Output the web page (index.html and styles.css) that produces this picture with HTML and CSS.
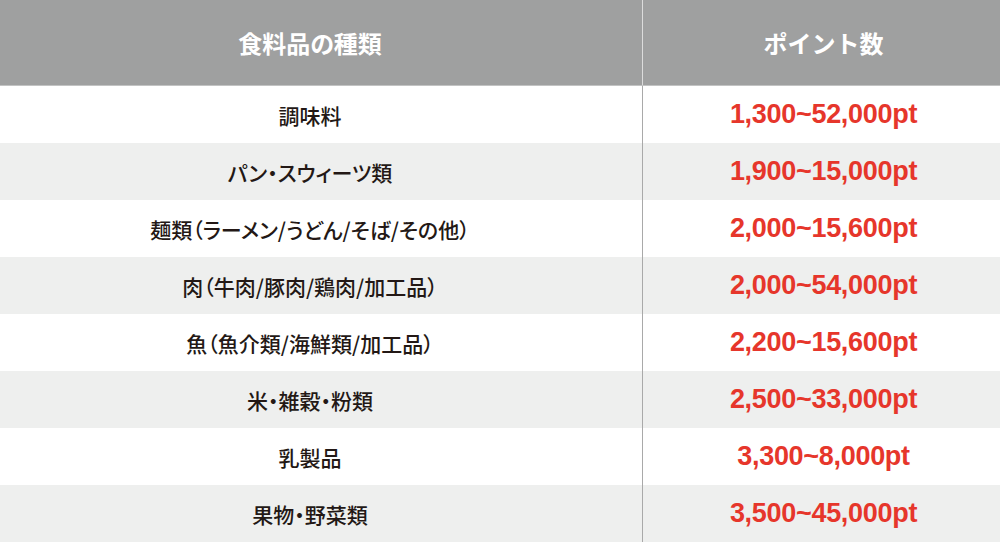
FILE: index.html
```html
<!DOCTYPE html>
<html lang="ja">
<head>
<meta charset="utf-8">
<link rel="stylesheet" href="styles.css">
</head>
<body>
<div class="table">
  <div class="row head">
    <div class="cell name">食料品の種類</div>
    <div class="cell pts">ポイント数</div>
  </div>
  <div class="row">
    <div class="cell name">調味料</div>
    <div class="cell pts">1,300~52,000pt</div>
  </div>
  <div class="row alt">
    <div class="cell name">パン・スウィーツ類</div>
    <div class="cell pts">1,900~15,000pt</div>
  </div>
  <div class="row">
    <div class="cell name">麺類（ラーメン/うどん/そば/その他）</div>
    <div class="cell pts">2,000~15,600pt</div>
  </div>
  <div class="row alt">
    <div class="cell name">肉（牛肉/豚肉/鶏肉/加工品）</div>
    <div class="cell pts">2,000~54,000pt</div>
  </div>
  <div class="row">
    <div class="cell name">魚（魚介類/海鮮類/加工品）</div>
    <div class="cell pts">2,200~15,600pt</div>
  </div>
  <div class="row alt">
    <div class="cell name">米・雑穀・粉類</div>
    <div class="cell pts">2,500~33,000pt</div>
  </div>
  <div class="row">
    <div class="cell name">乳製品</div>
    <div class="cell pts">3,300~8,000pt</div>
  </div>
  <div class="row alt">
    <div class="cell name">果物・野菜類</div>
    <div class="cell pts">3,500~45,000pt</div>
  </div>
</div>
</body>
</html>
```
FILE: styles.css
```css
html, body {
  margin: 0;
  padding: 0;
  background: #ffffff;
}
.table {
  width: 1000px;
  display: flex;
  flex-direction: column;
}
.row {
  display: grid;
  grid-template-columns: 643px 357px;
  height: 57px;
  background: #ffffff;
}
.row.alt {
  background: #eeefee;
}
.row.head {
  height: 85px;
  background: #9fa0a0;
  border-bottom: 1px solid #c2c3c3;
}
.cell {
  display: flex;
  align-items: center;
  justify-content: center;
}
.cell.name {
  padding-right: 22px;
  font-family: "Noto Sans CJK JP", "Noto Sans", sans-serif;
  font-size: 21px;
  font-weight: 500;
  color: #231815;
  font-feature-settings: "palt";
  border-right: 1px solid #a9a9a9;
}
.cell.pts {
  font-family: "Liberation Sans", Arial, sans-serif;
  font-size: 27px;
  font-weight: 700;
  color: #e6362b;
  letter-spacing: -0.3px;
  padding-left: 4px;
}
.head .cell {
  font-family: "Noto Sans CJK JP", "Noto Sans", sans-serif;
  font-size: 24px;
  font-weight: 700;
  color: #ffffff;
  letter-spacing: 0;
}
.head .cell.name {
  border-right: 1px solid #dcdcdc;
}
```
